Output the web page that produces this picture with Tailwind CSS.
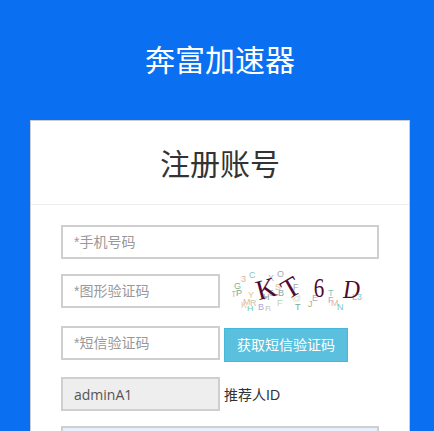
<!DOCTYPE html>
<html lang="zh">
<head>
<meta charset="UTF-8">
<title>注册账号</title>
<script src="https://cdn.jsdelivr.net/npm/@tailwindcss/browser@4"></script>
</head>
<body class="bg-[#0b6ff2] font-['Liberation_Sans','Noto_Sans_CJK_SC',sans-serif]">
<div class="h-[431px] overflow-hidden">
  <!-- header -->
  <h1 class="w-[440px] pt-[41px] h-[120px] text-center text-[30px] leading-[40px] font-normal text-white">奔富加速器</h1>

  <!-- card -->
  <div class="mx-[30px] w-[380px] h-[400px] border border-[#ccc] bg-white">
    <h2 class="h-[84px] border-b border-[#eee] pt-[22px] text-center text-[30px] leading-[44px] font-normal text-[#333]">注册账号</h2>

    <div class="pl-[30px] pt-[20px] flex flex-col gap-[15px]">
      <input class="w-[318px] h-[34px] border-2 border-[#cfcfcf] px-[11px] text-sm text-[#555] placeholder:text-[#999] outline-none" placeholder="*手机号码">

      <div class="flex items-center h-[34px]">
        <input class="w-[159px] h-[34px] border-2 border-[#cfcfcf] px-[11px] text-sm text-[#555] placeholder:text-[#999] outline-none" placeholder="*图形验证码">
        <!-- captcha -->
        <div class="relative ml-[12px] w-[130px] h-[40px] overflow-hidden text-[9px] text-[#500a30]">
          <span class="absolute left-[9px] top-[2px] text-[#dcb48c]">3</span>
          <span class="absolute left-[17px] top-[-2px] text-[#8cc8c0]">C</span>
          <span class="absolute left-[36px] top-[1px] text-[#b8b0d8]">X</span>
          <span class="absolute left-[45px] top-[-3px] text-[#a8a8a8]">O</span>
          <span class="absolute left-[2px] top-[9px] text-[#7db88a]">G</span>
          <span class="absolute left-[-1px] top-[17px] text-[#d8b98c]">T</span>
          <span class="absolute left-[4px] top-[16px] text-[#8aa39a]">P</span>
          <span class="absolute left-[16px] top-[18px] text-[#e0c49a]">Y</span>
          <span class="absolute left-[11px] top-[25px] text-[#e8b890]">M</span>
          <span class="absolute left-[18px] top-[26px] text-[#c8bfa8]">R</span>
          <span class="absolute left-[9px] top-[28px] text-[#e8c8a0]">K</span>
          <span class="absolute left-[15px] top-[32px] text-[#78c8a8]">H</span>
          <span class="absolute left-[26px] top-[30px] text-[#a8a8d8]">B</span>
          <span class="absolute left-[33px] top-[32px] text-[#c8c8c8]">B</span>
          <span class="absolute left-[31px] top-[20px] text-[#9a9a9a]">H</span>
          <span class="absolute left-[37px] top-[16px] text-[#8fb89a]">6</span>
          <span class="absolute left-[43px] top-[10px] text-[#e0b8a0]">S</span>
          <span class="absolute left-[46px] top-[16px] text-[#88a8a0]">B</span>
          <span class="absolute left-[45px] top-[26px] text-[#b8d8a8]">F</span>
          <span class="absolute left-[61px] top-[10px] text-[#a8a8a8]">F</span>
          <span class="absolute left-[60px] top-[21px] text-[#d8d8b8]">@</span>
          <span class="absolute left-[63px] top-[30px] text-[#7aa898]">T</span>
          <span class="absolute left-[80px] top-[21px] text-[#a8b0c0]">E</span>
          <span class="absolute left-[76px] top-[27px] text-[#b8a888]">J</span>
          <span class="absolute left-[96px] top-[16px] text-[#78c8c0]">T</span>
          <span class="absolute left-[96px] top-[23px] text-[#a8a8d8]">F</span>
          <span class="absolute left-[99px] top-[26px] text-[#e8b890]">M</span>
          <span class="absolute left-[105px] top-[30px] text-[#78c8c0]">N</span>
          <span class="absolute left-[120px] top-[20px] text-[#88c8c8]">L3</span>
          <span class="absolute left-[24px] top-[4px] font-['Liberation_Serif',serif] text-[28px] leading-[28px] -rotate-[15deg]">K</span>
          <span class="absolute left-[50px] top-[3px] font-['Liberation_Serif',serif] text-[28px] leading-[28px] -rotate-[30deg]">T</span>
          <span class="absolute left-[80px] top-[3px] font-['Liberation_Serif',serif] text-[28px] leading-[28px] scale-x-75">6</span>
          <span class="absolute left-[110px] top-[5px] font-['Liberation_Serif',serif] text-[26px] leading-[28px] italic scale-x-90">D</span>
        </div>
      </div>

      <div class="flex items-start h-[36px] mt-[3px]">
        <input class="w-[159px] h-[34px] border-2 border-[#cfcfcf] px-[11px] text-sm text-[#555] placeholder:text-[#999] outline-none" placeholder="*短信验证码">
        <button class="ml-[4px] mt-[2px] w-[124px] h-[34px] border border-[#46b8da] bg-[#5bc0de] text-sm text-white">获取短信验证码</button>
      </div>

      <div class="flex items-center h-[34px]">
        <input class="w-[159px] h-[34px] border-2 border-[#cfcfcf] bg-[#eee] px-[11px] font-['Open_Sans',sans-serif] text-sm text-[#555] outline-none" value="adminA1" readonly>
        <span class="ml-[4px] pt-[2px] text-sm text-[#333]">推荐人ID</span>
      </div>

      <input class="w-[318px] h-[34px] border-2 border-[#cfcfcf] bg-[#e8f0fe] px-[11px] text-sm outline-none">
    </div>
  </div>
</div>
</body>
</html>
